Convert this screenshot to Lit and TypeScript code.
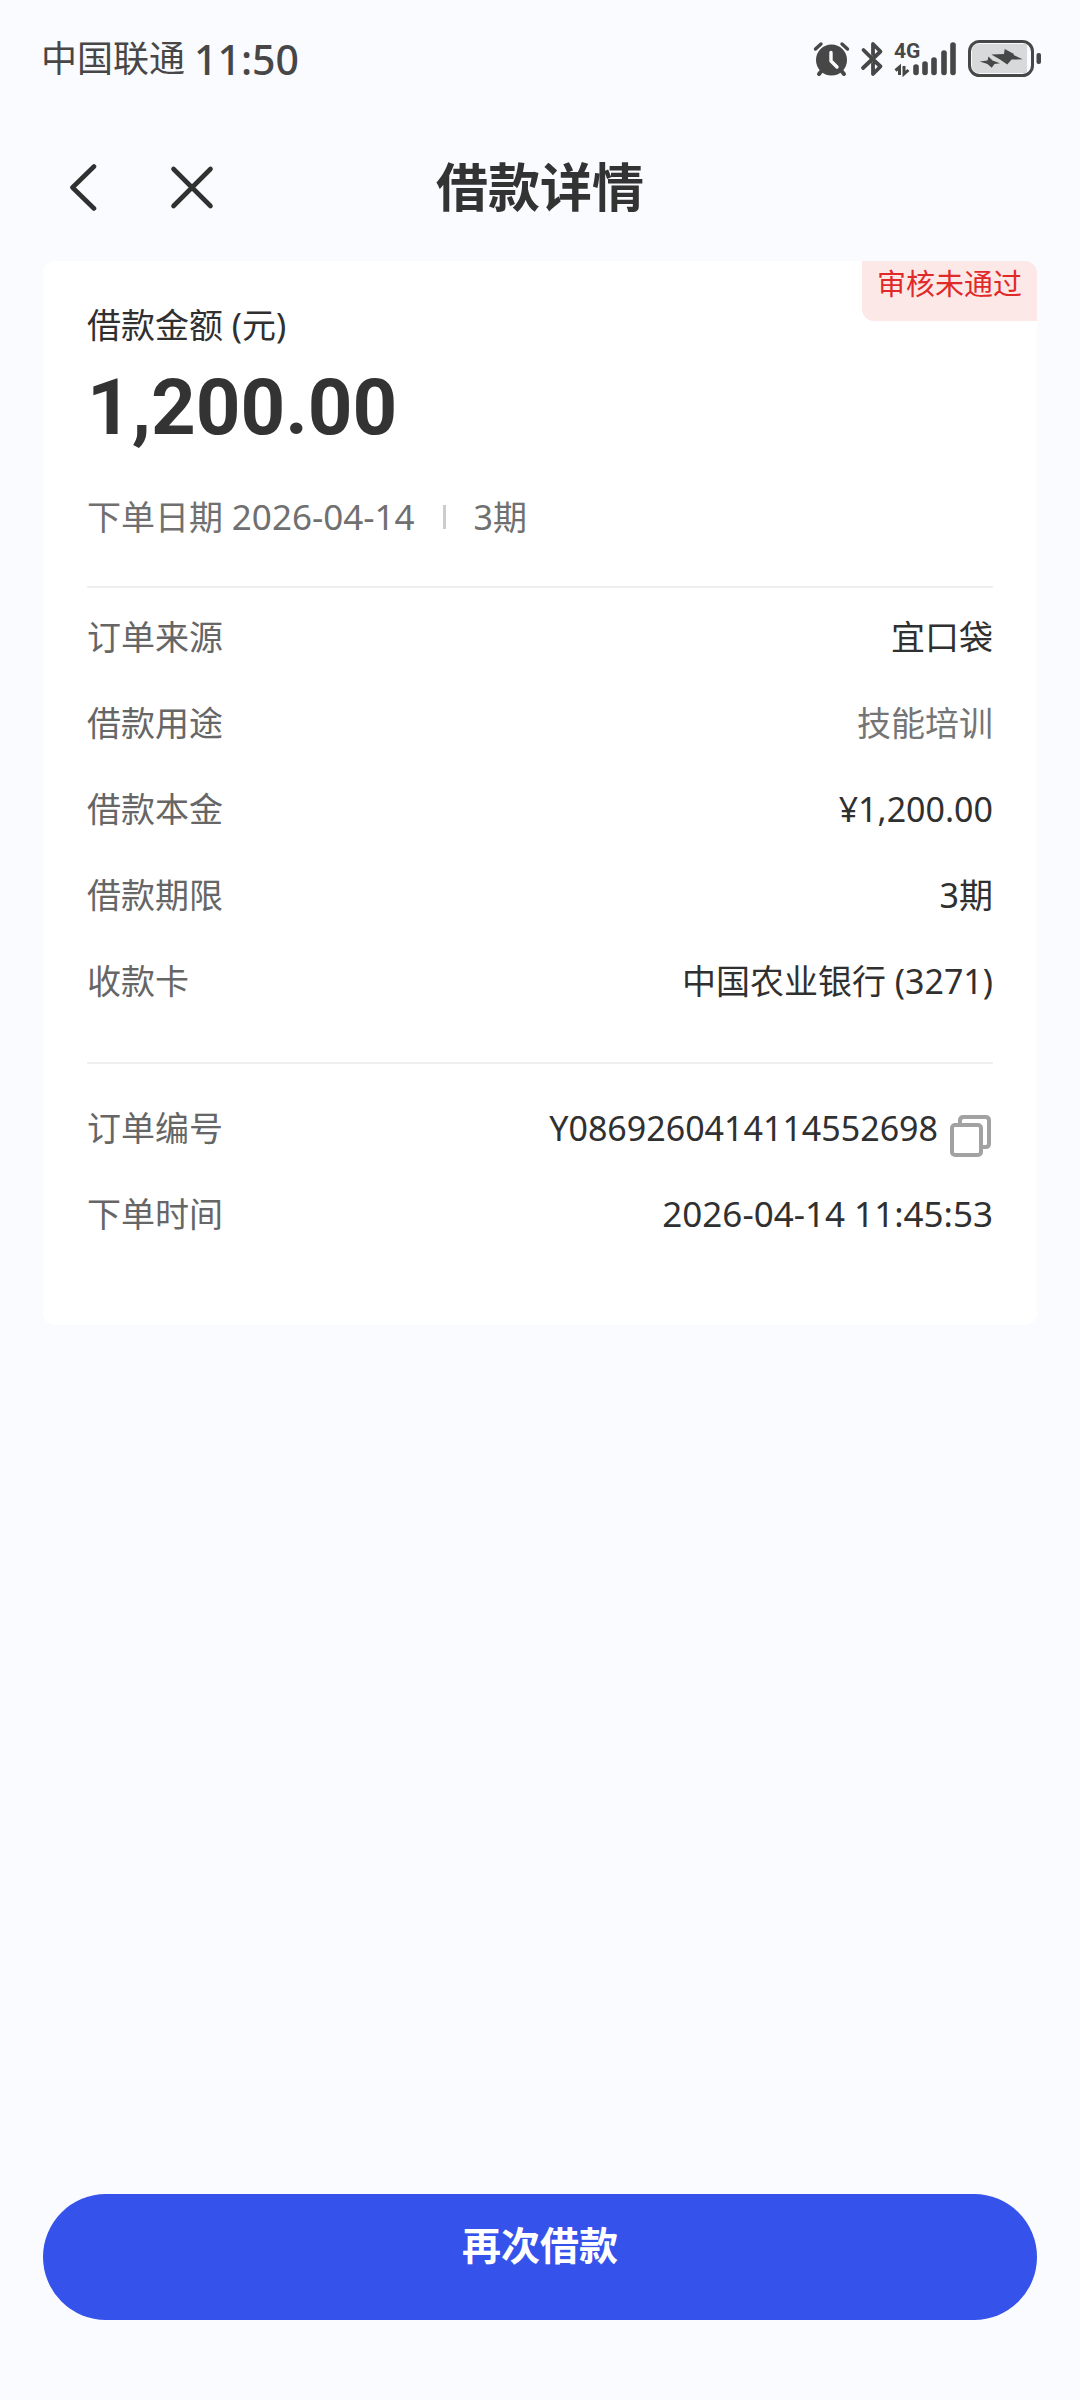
import { LitElement, html, css, svg } from "lit";
import { customElement, state } from "lit/decorators.js";
import { classMap } from "lit/directives/class-map.js";

interface Detail {
  label: string;
  value: string;
  muted?: boolean;
  copyable?: boolean;
  date?: boolean;
}

const LOAN: Detail[] = [
  { label: "订单来源", value: "宜口袋" },
  { label: "借款用途", value: "技能培训", muted: true },
  { label: "借款本金", value: "¥1,200.00" },
  { label: "借款期限", value: "3期" },
  { label: "收款卡", value: "中国农业银行 (3271)" },
];

const ORDER: Detail[] = [
  { label: "订单编号", value: "Y0869260414114552698", copyable: true },
  { label: "下单时间", value: "2026-04-14 11:45:53", date: true },
];

@customElement("status-bar")
class StatusBar extends LitElement {
  static styles = css`
    :host {
      display: flex;
      align-items: center;
      justify-content: space-between;
      height: 118px;
      padding: 0 38px 0 41px;
      box-sizing: border-box;
      color: #474747;
    }
    .left {
      display: flex;
      align-items: center;
      gap: 9px;
    }
    .carrier {
      font-size: 36px;
      line-height: 48px;
    }
    .time {
      font: 500 41px/48px "Noto Sans", sans-serif;
    }
    .right {
      display: flex;
      align-items: center;
      gap: 10px;
    }
    .network {
      font: 700 21px Roboto, "Liberation Sans", sans-serif;
    }
    svg {
      display: block;
    }
  `;

  render() {
    const bars = [
      [22, 24],
      [31, 21],
      [40, 17],
      [50, 10],
      [59, 2],
    ];
    return html`
      <div class="left">
        <span class="carrier">中国联通</span>
        <span class="time">11:50</span>
      </div>
      <div class="right">
        <svg width="37" height="36" viewBox="0 0 37 36" fill="none" stroke="#474747" stroke-linecap="round">
          <circle cx="18.5" cy="19" r="15.5" fill="#474747" stroke="none" />
          <path d="M2.5 8 8 3M34.5 8 29 3" stroke-width="3.4" />
          <path d="M8.5 30 6 33M28.5 30 31 33" stroke-width="4" />
          <path d="M18 11.5V20l6 6" stroke="#fafbff" stroke-width="3.4" stroke-linejoin="round" />
        </svg>
        <svg width="24" height="36" viewBox="0 0 24 36" fill="none" stroke="#474747" stroke-width="3.8" stroke-linecap="round" stroke-linejoin="round">
          <path d="M3.5 9 12.500 18 20.500 25.500 13 33V23M13 13V3L20.500 10.500 12.500 18 3 27" />
        </svg>
        <svg width="64" height="56" viewBox="0 -10 64 56">
          <text class="network" x="0" y="17" fill="#474747">4G</text>
          <path d="M5.500 34V26L1.500 29.500M10 25V33L14.500 29" fill="none" stroke="#474747" stroke-width="3" />
          ${bars.map(
            ([x, y]) => svg`<path d="M${x} ${y + 2}V31.500" stroke="#474747" stroke-width="5.6" stroke-linecap="round" />`
          )}
        </svg>
        <svg width="74" height="38" viewBox="0 0 74 38">
          <rect x="1.500" y="1.500" width="63" height="34" rx="10" fill="#fafbff" stroke="#474747" stroke-width="3" />
          <path d="M11 4H59V33H11Q4 33 4 26V11Q4 4 11 4Z" fill="#d8d9da" />
          <path d="M36.700 9 46 14 45.500 15 54.700 19.300 43.500 19.500 39.300 24.500 32 19.500 23.300 14.500 36 14Z" fill="#474747" />
          <path d="M20.500 16.500 24.500 20.500 32 23.300 26.500 24 23.700 27.700 19.500 24 11.700 21.500 19.500 20.500Z" fill="#474747" />
          <rect x="68.500" y="13" width="4.500" height="11" rx="2" fill="#474747" />
        </svg>
      </div>
    `;
  }
}

@customElement("detail-list")
class DetailList extends LitElement {
  static properties = { items: { attribute: false } };
  declare items: Detail[];

  static styles = css`
    .list {
      display: flex;
      flex-direction: column;
      gap: 40px;
      margin: 0;
    }
    .row {
      display: flex;
      justify-content: space-between;
      line-height: 46px;
    }
    .label {
      color: #666;
    }
    .value {
      display: flex;
      gap: 12px;
      margin: 0;
      color: #303030;
    }
    .muted {
      color: #757575;
    }
    .date {
      font-size: 35px;
    }
    .copy {
      display: block;
      height: 46px;
      padding: 10px 0 0;
      border: 0;
      background: none;
    }
    .icon {
      display: block;
    }
  `;

  private copy(value: string) {
    navigator.clipboard?.writeText(value);
  }

  render() {
    return html`
      <dl class="list">
        ${this.items.map(
          (item) => html`
            <div class="row">
              <dt class="label">${item.label}</dt>
              <dd class=${classMap({ value: true, muted: !!item.muted, date: !!item.date })}>
                <span>${item.value}</span>
                ${item.copyable
                  ? html`<button class="copy" aria-label="复制" @click=${() => this.copy(item.value)}>
                      <svg class="icon" width="43" height="42" viewBox="0 0 43 42" fill="none" stroke="#a2a2a2" stroke-width="4">
                        <path d="M10 9V5.500Q10 2 13.500 2H35.500Q39 2 39 5.500V28.500Q39 32 35.500 32H32" />
                        <rect x="2" y="10" width="29" height="30" rx="3" />
                      </svg>
                    </button>`
                  : null}
              </dd>
            </div>
          `
        )}
      </dl>
    `;
  }
}

@customElement("app-root")
class AppRoot extends LitElement {
  static styles = css`
    :host {
      display: flex;
      flex-direction: column;
      min-height: 100vh;
      background: #fafbff;
      color: #303030;
      font: 400 34px/46px "Noto Sans", "Noto Sans CJK SC", sans-serif;
    }
    .nav {
      display: grid;
      grid-template-columns: 1fr auto 1fr;
      align-items: center;
      height: 138px;
      padding: 0 42px;
    }
    .actions {
      display: flex;
      gap: 24px;
    }
    .action {
      display: grid;
      place-items: center;
      width: 84px;
      height: 84px;
      padding: 0;
      border: 0;
      background: none;
    }
    .title {
      margin: 0;
      font-size: 52px;
      line-height: 72px;
      font-weight: 700;
      color: #333;
    }
    .card {
      position: relative;
      margin: 5px 43px 0;
      padding: 41px 44px 88px;
      border-radius: 12px;
      background: #fff;
    }
    .badge {
      position: absolute;
      top: 0;
      right: 0;
      padding: 2px 15px 16px;
      border-radius: 0 12px 0 12px;
      background: #fde8e8;
      color: #e02a2a;
      font-size: 29px;
      line-height: 42px;
    }
    .caption {
      margin: 0;
    }
    .amount {
      margin: 12px 0 0;
      font: 700 78px/96px Roboto, sans-serif;
      color: #333;
    }
    .meta {
      display: flex;
      align-items: center;
      gap: 28px;
      margin: 38px 0 0;
      color: #707070;
    }
    .date {
      font-size: 35px;
    }
    .bar {
      width: 3px;
      height: 24px;
      background: #ccc;
    }
    .rule {
      height: 2px;
      margin: 46px 0 26px;
      border: 0;
      background: #efefef;
    }
    .rule.second {
      margin: 58px 0 41px;
    }
    .footer {
      margin-top: auto;
      padding: 0 43px 80px;
    }
    .again {
      display: block;
      width: 100%;
      padding: 23px 0 47px;
      border: 0;
      border-radius: 63px;
      background: #3552ea;
      color: #fff;
      font: inherit;
      font-size: 39px;
      line-height: 56px;
      font-weight: 700;
    }
  `;

  @state() private term = "3期";

  render() {
    return html`
      <status-bar></status-bar>
      <header class="nav">
        <div class="actions">
          <button class="action" aria-label="返回" @click=${() => history.back()}>
            <svg width="48" height="48" viewBox="0 0 48 48" fill="none" stroke="#303030" stroke-width="4.600" stroke-linecap="round" stroke-linejoin="round">
              <path d="M34 3.500 12.500 24.500 34 45.500" />
            </svg>
          </button>
          <button class="action" aria-label="关闭">
            <svg width="48" height="48" viewBox="0 0 48 48" fill="none" stroke="#303030" stroke-width="4.600" stroke-linecap="round">
              <path d="M5.500 6 42.500 43M42.500 6 5.500 43" />
            </svg>
          </button>
        </div>
        <h1 class="title">借款详情</h1>
      </header>
      <main class="card">
        <span class="badge">审核未通过</span>
        <p class="caption">借款金额 (元)</p>
        <p class="amount">1,200.00</p>
        <p class="meta">
          <span>下单日期 <span class="date">2026-04-14</span></span>
          <span class="bar"></span>
          <span>${this.term}</span>
        </p>
        <hr class="rule" />
        <detail-list .items=${LOAN}></detail-list>
        <hr class="rule second" />
        <detail-list .items=${ORDER}></detail-list>
      </main>
      <footer class="footer">
        <button class="again">再次借款</button>
      </footer>
    `;
  }
}
